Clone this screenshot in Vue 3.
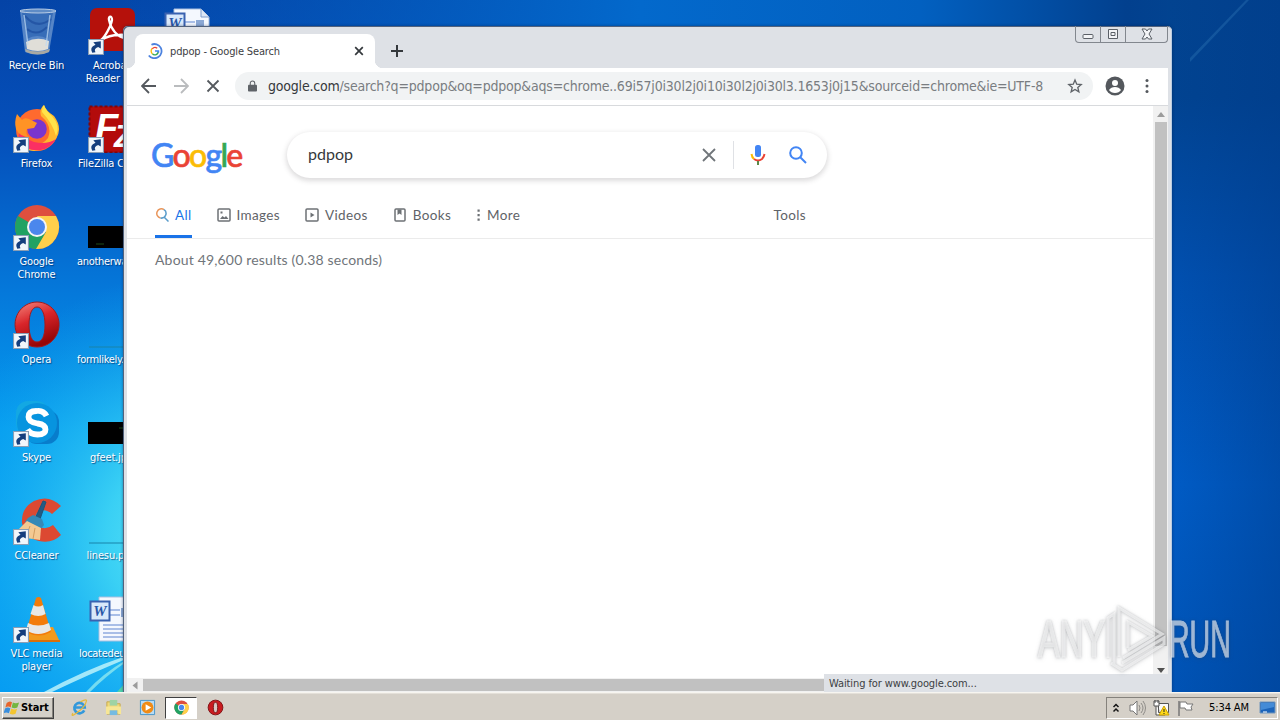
<template>
    <div class="desktop">
        <svg class="wallpaper" viewBox="0 0 1280 692" preserveAspectRatio="none" aria-hidden="true">
            <defs>
                <linearGradient id="sky" x1="0" y1="0" x2="0" y2="1">
                    <stop offset="0" stop-color="#0443a6" />
                    <stop offset="0.2" stop-color="#0550bb" />
                    <stop offset="0.42" stop-color="#0578da" />
                    <stop offset="0.62" stop-color="#049cf0" />
                    <stop offset="1" stop-color="#049bf2" />
                </linearGradient>
                <radialGradient id="glow" gradientUnits="userSpaceOnUse" cx="200" cy="540" r="270">
                    <stop offset="0" stop-color="#6bedf6" />
                    <stop offset="0.35" stop-color="#43d9f5" stop-opacity="0.85" />
                    <stop offset="1" stop-color="#12a9f0" stop-opacity="0" />
                </radialGradient>
                <linearGradient id="topband" x1="0" y1="0" x2="1" y2="0">
                    <stop offset="0" stop-color="#0355b8" stop-opacity="0" />
                    <stop offset="0.5" stop-color="#0369cc" />
                    <stop offset="0.72" stop-color="#0260c0" />
                    <stop offset="0.88" stop-color="#02408e" />
                    <stop offset="1" stop-color="#034a96" />
                </linearGradient>
                <linearGradient id="right" x1="0" y1="0" x2="0" y2="1">
                    <stop offset="0" stop-color="#024390" />
                    <stop offset="0.14" stop-color="#014391" />
                    <stop offset="0.4" stop-color="#0150b0" />
                    <stop offset="0.7" stop-color="#005cc6" />
                    <stop offset="1" stop-color="#0053b5" />
                </linearGradient>
                <linearGradient id="rightshade" x1="0" y1="0" x2="1" y2="0">
                    <stop offset="0" stop-color="#003a88" stop-opacity="0" />
                    <stop offset="1" stop-color="#003a88" stop-opacity="0.45" />
                </linearGradient>
            </defs>
            <rect width="1280" height="692" fill="url(#sky)" />
            <rect width="400" height="692" fill="url(#glow)" />
            <rect width="1280" height="30" fill="url(#topband)" />
            <rect x="1168" width="112" height="692" fill="url(#right)" />
            <rect x="1168" width="112" height="692" fill="url(#rightshade)" />
            <path d="M1190 58 1246 0h3L1190 62Z" fill="#3c86c0" opacity="0.3" />
            <path d="M44 692Q84 670 126 656V659Q90 674 52 692Z" fill="#c5f6fb" opacity="0.8" />
            <path d="M86 692Q102 674 126 660V662Q106 676 90 692Z" fill="#9cefef" opacity="0.7" />
            <path d="M117 692 126 682V692Z" fill="#5fdc9a" opacity="0.8" />
        </svg>

        <div class="icon-grid">
            <div v-for="item in icons" :key="item.id" class="desk-icon" :class="item.id">
                <svg class="desk-art" viewBox="0 0 48 48" aria-hidden="true">
                    <template v-if="item.id === 'bin'">
                        <path d="M7 4 12 45q12 5 24 0L43 4q-18-4-36 0Z" fill="#719bd0" opacity="0.75" />
                        <path d="M9 6 14 32q10-6 21 0L40 6Z" fill="#2f66b4" opacity="0.8" />
                        <path d="M13 35q11-6 23-1l-1 8q-10 4-21 0Z" fill="#e0ded8" />
                        <path d="M12 42q12 5 25 0l-1 3q-11 5-23 0Z" fill="#a9a9a3" />
                        <path d="M12 9q12 14 26 3M14 22q10 8 20-2" fill="none" stroke="#1c4d9e" stroke-width="2" opacity="0.7" />
                        <path d="m11 8 4 30M37 8l-4 31" stroke="#bfdaf4" stroke-width="1.5" opacity="0.7" />
                        <ellipse cx="25" cy="4" rx="18" ry="2" fill="#5f8cc6" stroke="#b7cbe4" />
                    </template>
                    <template v-else-if="item.id === 'acrobat'">
                        <rect x="2" y="1" width="45" height="43" rx="7" fill="#b5110b" />
                        <path d="M13 33c4-3 10-14 11-20 0-5-4-4-3 0 2 9 8 17 16 18 3-1 0-4-6-3-6 0-13 2-18 5Z" fill="none" stroke="#fff" stroke-width="2.3" stroke-linejoin="round" />
                    </template>
                    <template v-else-if="item.id === 'doc' || item.id === 'located'">
                        <path d="M11 2h27l8 8v36H11Z" fill="#f4f8fe" stroke="#a9bfdf" />
                        <path d="M38 2v8h8" fill="#dbe6f5" stroke="#7f9dcc" />
                        <path d="M22 15h10M22 20h10M15 30h28M15 34h28M15 38h28M15 42h28" stroke="#8eabe0" stroke-width="1.4" />
                        <rect x="33" y="13" width="8" height="9" fill="#8ba8d4" />
                        <rect x="2.5" y="6.5" width="19" height="19" fill="#d9e8fa" stroke="#3a62b0" stroke-width="2" />
                        <text x="12" y="21" text-anchor="middle" class="word-mark">W</text>
                    </template>
                    <template v-else-if="item.id === 'firefox'">
                        <circle cx="24" cy="25" r="21" fill="#ff6a2e" />
                        <path d="M28 11q-2-7 3-11 2 6 10 11 9 12 2 23-8 12-22 12-9 0-15-9 19 9 29-4 5-12-7-22Z" fill="#ffb82e" />
                        <path d="M29 7q0-5 2-7 2 6 8 11 9 10 4 20-3-12-14-24Z" fill="#ffe34a" />
                        <path d="M5 35q8 12 23 10 10-2 15-11-9 6-22 3Q10 33 7 23Z" fill="#fb2f63" />
                        <circle cx="24" cy="24" r="9.8" fill="#7a35ce" />
                        <path d="M3 24Q1 17 4 9l5 6q2-3 7-1l8 4-3 5-7 1q-2 5 2 8-9 0-13-8Z" fill="#ff9325" />
                    </template>
                    <template v-else-if="item.id === 'filezilla'">
                        <rect x="1.5" y="1.5" width="46" height="46" fill="#b30b0b" stroke="#830507" stroke-width="2" stroke-dasharray="3 2" />
                        <text x="7" y="36" class="fz-mark">F<tspan x="26" y="42" class="small">Z</tspan></text>
                    </template>
                    <template v-else-if="item.id === 'chrome'">
                        <circle cx="24" cy="24" r="22" fill="#de4f3e" />
                        <path d="M24 24 5 13A22 22 0 0 0 24 46L33 29Z" fill="#21a263" />
                        <path d="M24 13h19A22 22 0 0 1 23 46l10-17Z" fill="#ffd04b" />
                        <circle cx="24" cy="24" r="10" fill="#f5f5f5" />
                        <circle cx="24" cy="24" r="8" fill="#4b87ed" />
                    </template>
                    <template v-else-if="item.id === 'opera'">
                        <defs>
                            <linearGradient id="operaRed" x1="0" y1="0" x2="0.4" y2="1">
                                <stop offset="0" stop-color="#f58a80" />
                                <stop offset="0.48" stop-color="#d9252a" />
                                <stop offset="1" stop-color="#970606" />
                            </linearGradient>
                        </defs>
                        <path fill-rule="evenodd" d="M24 1a22 22.5 0 1 0 .1 0ZM24 6c5 0 8 7 8 18s-3 17-8 17-8-6-8-17 3-18 8-18Z" fill="url(#operaRed)" stroke="#a41a1b" />
                    </template>
                    <template v-else-if="item.id === 'skype'">
                        <rect x="3" y="2" width="33" height="34" rx="12" fill="#13a8e3" />
                        <rect x="12" y="11" width="34" height="34" rx="12" fill="#087dcc" />
                        <circle cx="24" cy="24" r="20" fill="#0794df" />
                        <path d="M33.500 17q-3-6-10-5-8 0-8 6 0 5 9 6.500 8 1 8 6 0 5-8 5-7 0-10-5" fill="none" stroke="#fff" stroke-width="5.800" />
                    </template>
                    <template v-else-if="item.id === 'ccleaner'">
                        <path d="M48 9Q36-3 21 4 8 11 9 26q3 15 17 18 13 3 22-6l-8-10q-8 6-14 1-7-6-2-13 7-6 15 1Z" fill="#dc4932" />
                        <path d="m21 24 9-20 3 1-7 20Z" fill="#235b83" stroke="#1b557c" />
                        <path d="m15 21 5-3 9 4 2 6-5 6-14-9Z" fill="#3589b7" />
                        <path d="m14 24 14 7-1 12-14-2-9-7Z" fill="#f4c992" />
                        <path d="m17 29-4 11M22 31l-2 11" stroke="#d39d60" />
                    </template>
                    <template v-else-if="item.id === 'vlc'">
                        <path d="m11 33-5 12h40l-6-13Z" fill="#f39a1b" />
                        <path d="m6 45 41 0v2H5Z" fill="#d96f09" />
                        <path d="M23 3q2.500-2 5 0l10 34q-12 7-25 0Z" fill="#f37c0a" />
                        <path d="m20.500 10-3 9q8 4 15 0l-2.500-9q-5 3-9.500 0ZM15 28l-2 7q12 8 25 0l-2-7q-11 5-21 0Z" fill="#e8e8e6" />
                    </template>
                    <template v-else-if="item.id === 'another' || item.id === 'gfeet'">
                        <rect y="23" width="48" height="22" />
                        <path :d="item.id === 'another' ? 'M8 41h8' : 'M31 29h8'" stroke="#1f4a18" />
                    </template>
                    <path v-else d="M1 46h47" stroke="#1883a9" stroke-width="1.2" />
                </svg>
                <svg v-if="item.shortcut" class="shortcut" viewBox="0 0 15 15" aria-hidden="true">
                    <path d="M.5.5h14v14H.5Z" fill="#f1f6fb" stroke="#8a9eb5" />
                    <path d="M4 13Q1 8 7 5.500L5 3l7-1v7L9.500 7.500Q5 9 7 12.500Z" fill="#153e7d" />
                </svg>
                <span class="desk-label">{{ item.label }}</span>
            </div>
        </div>

        <main class="browser">
            <header class="tab-strip">
                <div class="tab">
                    <svg class="loader" viewBox="0 0 18 18" aria-hidden="true">
                        <path d="M5 1.900A8 8 0 1 1 2 14" fill="none" stroke="#4c82df" stroke-width="2" />
                        <path d="M12.500 9A3.700 3.700 0 0 1 6 12" fill="none" stroke="#34a853" stroke-width="1.500" />
                        <path d="M6 12a4 4 0 0 1 0-6" fill="none" stroke="#fbbc05" stroke-width="1.500" />
                        <path d="M6 6.500a4 4 0 0 1 5.500-.5" fill="none" stroke="#ea4335" stroke-width="1.500" />
                        <path d="M9 9h4v2" fill="none" stroke="#4285f4" stroke-width="1.500" />
                    </svg>
                    <span class="tab-title">pdpop - Google Search</span>
                    <svg class="tab-close" viewBox="0 0 10 10" aria-hidden="true"><path d="m1.200 1.200 7.600 7.600M8.800 1.200 1.200 8.800" /></svg>
                </div>
                <svg class="new-tab" viewBox="0 0 12 12" aria-hidden="true"><path d="M6 0v12M0 6h12" /></svg>
                <div class="window-controls">
                    <span class="control"><svg viewBox="0 0 12 12"><rect x="1" y="6.500" width="10" height="4" rx="1" /></svg></span>
                    <span class="control"><svg viewBox="0 0 12 12"><path d="M1.500 1.500h9v9h-9ZM4 4.500h4v3H4Z" /></svg></span>
                    <span class="control close"><svg viewBox="0 0 12 12"><path d="M1 1h3.500L6 3l1.500-2H11L8 6l3 5H7.500L6 9l-1.500 2H1l3-5Z" /></svg></span>
                </div>
            </header>

            <div class="toolbar">
                <svg class="nav-icon" viewBox="0 0 16 16"><path d="M15 8H2M8 1 1 8l7 7" /></svg>
                <svg class="nav-icon muted" viewBox="0 0 16 16"><path d="M1 8h13M8 1l7 7-7 7" /></svg>
                <svg class="nav-icon stop" viewBox="0 0 16 16"><path d="m2.500 2.500 11 11M13.500 2.500l-11 11" /></svg>
                <div class="address">
                    <svg class="lock" viewBox="0 0 10 12"><path d="M1 4.500h8q1 0 1 1V11q0 1-1 1H1q-1 0-1-1V5.500q0-1 1-1Z" /><path d="M2.500 5V3a2.500 2.500 0 0 1 5 0v2" fill="none" stroke="#5f6368" stroke-width="1.200" /></svg>
                    <span class="host">google.com</span><span class="query">/search?q=pdpop&amp;oq=pdpop&amp;aqs=chrome..69i57j0i30l2j0i10i30l2j0i30l3.1653j0j15&amp;sourceid=chrome&amp;ie=UTF-8</span>
                    <svg class="star" viewBox="0 0 24 24"><path d="m12 3 2.600 6.200 6.700.6-5.100 4.400 1.600 6.500-5.800-3.400-5.800 3.400 1.600-6.500-5.100-4.400 6.700-.6Z" /></svg>
                </div>
                <svg class="profile" viewBox="0 0 20 20"><circle cx="10" cy="10" r="9.500" fill="#54585d" /><circle cx="10" cy="7" r="3" fill="#fff" /><path d="M4 14q2-3 6-3t6 3q-2 3-6 3t-6-3Z" fill="#fff" /></svg>
                <svg class="kebab" viewBox="0 0 4 16"><circle cx="2" cy="2.500" r="1.500" /><circle cx="2" cy="8" r="1.500" /><circle cx="2" cy="13.500" r="1.500" /></svg>
            </div>

            <div class="viewport">
                <section class="page">
                    <div class="search-row">
                        <div class="google-logo"><span>G</span><span>o</span><span>o</span><span>g</span><span>l</span><span>e</span></div>
                        <div class="search-box">
                            <span class="search-value">pdpop</span>
                            <svg class="clear" viewBox="0 0 14 14"><path d="m1 1 12 12M13 1 1 13" /></svg>
                            <i class="divider"></i>
                            <svg class="mic" viewBox="0 0 16 20"><rect x="5" width="6" height="12" rx="2.500" fill="#4285f4" /><path d="M1.500 9Q2 12.500 4 14" fill="none" stroke="#fbbc05" stroke-width="2" /><path d="M4 14q4 3 8 0 2-2 2.500-5" fill="none" stroke="#ea4335" stroke-width="2" /><path d="M8 16v4" stroke="#5c8a4a" stroke-width="2" /></svg>
                            <svg class="magnifier" viewBox="0 0 18 18"><circle cx="7" cy="7" r="5.800" /><path d="m11 11 6 6" /></svg>
                        </div>
                    </div>
                    <nav class="result-tabs">
                        <a v-for="tab in tabs" :key="tab.name" class="result-tab" :class="tab.name.toLowerCase()">
                            <svg :viewBox="tab.name === 'More' ? '5 0 4 14' : '0 0 14 14'" aria-hidden="true">
                                <template v-if="tab.name === 'All'">
                                    <path d="M9 1.700A4.600 4.600 0 1 0 5.500 10" stroke="#e9965b" />
                                    <path d="M9 1.700A4.600 4.600 0 0 1 5.500 10M9 9l4.500 4.500" stroke="#5a9dcc" />
                                </template>
                                <path v-else :d="tab.path" />
                                <path v-if="tab.fill" :d="tab.fill" class="solid" />
                            </svg>
                            <span>{{ tab.name }}</span>
                        </a>
                        <a class="tools">Tools</a>
                    </nav>
                    <p class="result-stats">About 49,600 results (0.38 seconds)</p>
                </section>
                <div class="v-scroll"><i class="arrow up"></i><i class="v-thumb"></i><i class="arrow down"></i></div>
            </div>
            <footer class="bottom-row">
                <i class="arrow left"></i>
                <i class="h-thumb"></i>
                <span class="status">Waiting for www.google.com...</span>
            </footer>
        </main>

        <footer class="taskbar">
            <button class="start" type="button">
                <svg viewBox="0 0 18 16"><path d="M3 3q3-3 6-1L7.500 8Q5 6 1.500 8Z" fill="#e7652c" /><path d="M10 2.500q3 1.500 7 0l-2 5.500q-3 1.500-6.500 0Z" fill="#73b641" /><path d="M1.200 9q3-2 6 0l-1.700 5.500q-3-2-6 0Z" fill="#398edd" /><path d="M8.200 9q3 2 6.500.5L13 15q-3 1.500-6.500 0Z" fill="#f4c52f" /></svg>
                Start
            </button>
            <div class="quick-launch">
                <span class="launch"><svg viewBox="0 0 18 18"><path d="M14 12a5.500 5.500 0 1 1 .5-3H5" fill="none" stroke="#3298db" stroke-width="2.800" /><path d="M2 15Q-1 20 7 14T16 3Q18-1 10 3" fill="none" stroke="#e5b93c" stroke-width="1.300" /></svg></span>
                <span class="launch"><svg viewBox="0 0 18 18"><path d="M2 3h6l1 2h7v11H2Z" fill="#f1d878" stroke="#c7a94a" /><path d="M5 1h8v6H5Z" fill="#9ed3a4" /><path d="M1 8h16v8h-3v-4H5v4H1Z" fill="#f7e695" /><path d="M5 12h8v5H5Z" fill="#75bbe2" /></svg></span>
                <span class="launch"><svg viewBox="0 0 18 18"><path d="M1.500 1.500h15v15h-15Z" fill="#b8dcf5" stroke="#4594c9" /><circle cx="9" cy="9" r="6.300" fill="#f08b16" /><path d="m7 5.500 6 3.500-6 3.500Z" fill="#fff" /></svg></span>
                <span class="launch active"><svg viewBox="0 0 48 48"><circle cx="24" cy="24" r="20" fill="#de4f3e" /><path d="M24 24 7 13A20 20 0 0 0 24 44l9-15Z" fill="#21a263" /><path d="M24 14h18A20 20 0 0 1 24 44l9-15Z" fill="#ffd04b" /><circle cx="24" cy="24" r="10" fill="#fff" /><circle cx="24" cy="24" r="7.500" fill="#4b87ed" /></svg></span>
                <span class="launch"><svg viewBox="0 0 18 18"><circle cx="9" cy="9" r="7.800" fill="#c91b20" stroke="#7c1214" /><ellipse cx="9" cy="9" rx="2.300" ry="5.500" fill="#d9c8c4" stroke="#751416" /></svg></span>
            </div>
            <div class="tray">
                <svg class="chevrons" viewBox="0 0 8 12"><path d="m1.500 5 2.500-2.500L6.500 5M1.500 9.500 4 7l2.500 2.500" /></svg>
                <svg class="tray-icon" viewBox="0 0 17 16"><path d="M1 5h3l4-4v14l-4-4H1Z" fill="#fff" stroke="#777" /><path d="M10 5q2 3 0 6M12 3q4 5 0 10M14 1q5 7 0 14" fill="none" stroke="#8e8c88" /></svg>
                <svg class="tray-icon" viewBox="0 0 17 16"><path d="M5.500 3.500h10v9h-10ZM3 6v9h9" fill="#f9f9f9" stroke="#555" /><path d="M1 1h5v5H1ZM2 0v3M5 0v3" fill="#fff" stroke="#555" /><path d="m11 6 5 9H6Z" fill="#ffda19" stroke="#cda100" /><path d="M11 9v3M11 13v1" stroke="#222" /></svg>
                <svg class="tray-icon" viewBox="0 0 17 16"><path d="M2 1v15" stroke="#777" stroke-width="1.500" /><path d="M3 2h6l1 2h6l-2 3 1 3H9L8 8H3Z" fill="#fff" stroke="#777" /></svg>
                <span class="clock">5:34 AM</span>
                <svg class="show-desktop" viewBox="0 0 17 14"><path d="M1 1h15v11H1Z" fill="#1c64ba" stroke="#7096bd" /><path d="M2 2h13v4L2 9Z" fill="#448bd7" /><path d="M4 11h4" stroke="#fff" /></svg>
            </div>
        </footer>

        <svg class="watermark" viewBox="0 0 220 84" aria-label="ANY RUN">
            <g class="mark">
                <text transform="translate(4 57) scale(0.64 1)">ANY</text>
                <text transform="translate(135 57) scale(0.56 1)">RUN</text>
                <path d="M74 58V18l6-4v50M85 57V8l43 26-39 24M94 48V22l24 14-24 14M77 63l11 7 42-26v-6L88 63" />
            </g>
        </svg>
    </div>
</template>

<script setup>
const icons = [
    { id: 'bin', label: 'Recycle Bin' },
    { id: 'acrobat', label: 'Acrobat\nReader DC', shortcut: true },
    { id: 'doc', label: '' },
    { id: 'firefox', label: 'Firefox', shortcut: true },
    { id: 'filezilla', label: 'FileZilla Client', shortcut: true },
    { id: 'chrome', label: 'Google\nChrome', shortcut: true },
    { id: 'another', label: 'anotherwa...' },
    { id: 'opera', label: 'Opera', shortcut: true },
    { id: 'formlikely', label: 'formlikely.jpg' },
    { id: 'skype', label: 'Skype', shortcut: true },
    { id: 'gfeet', label: 'gfeet.jpg' },
    { id: 'ccleaner', label: 'CCleaner', shortcut: true },
    { id: 'linesu', label: 'linesu.png' },
    { id: 'vlc', label: 'VLC media\nplayer', shortcut: true },
    { id: 'located', label: 'locatedeu...' },
];

const frame = 'M2 1h10q1 0 1 1v10q0 1-1 1H2q-1 0-1-1V2q0-1 1-1Z';

const tabs = [
    { name: 'All' },
    { name: 'Images', path: frame, fill: 'm3 11 2.500-3 2 1.500L9 8l2.500 3ZM3.500 3.500h2v2h-2Z' },
    { name: 'Videos', path: frame, fill: 'm5.500 4.500 4 2.500-4 2.500Z' },
    { name: 'Books', path: 'M3 1h8q1 0 1 1v10q0 1-1 1H3q-1 0-1-1V2q0-1 1-1Z', fill: 'M4.500 1.500v5.500l2-1.500 2 1.500V1.500Z' },
    { name: 'More', fill: 'M6 1.500h2.200v2.200H6ZM6 6h2.200v2.200H6ZM6 10.500h2.200v2.200H6Z' },
];
</script>

<style>
body {
    margin: 0;
    overflow: hidden;
}
</style>

<style scoped>
* {
    box-sizing: border-box;
}

.desktop {
    position: relative;
    width: 1280px;
    height: 720px;
    overflow: hidden;
    display: flex;
    flex-direction: column;
    font-family: "DejaVu Sans Condensed", "DejaVu Sans", sans-serif;
    font-size: 11px;
}

.wallpaper {
    position: absolute;
    width: 1280px;
    height: 692px;
}

.icon-grid {
    position: absolute;
    top: 7px;
    left: -1px;
    display: grid;
    grid-template-columns: repeat(3, 75px);
    grid-auto-rows: 98px;
}

.desk-icon {
    position: relative;
    display: flex;
    flex-direction: column;
    align-items: center;
    color: #fff;
}

.desk-icon:nth-child(2n + 4) {
    grid-column: 1;
}

.desk-icon:nth-child(2n + 5) {
    grid-column: 2;
}

.desk-art {
    width: 48px;
    height: 48px;
    flex-shrink: 0;
}

.shortcut {
    position: absolute;
    left: 14px;
    top: 32px;
    width: 16px;
    height: 16px;
}

.desk-label {
    margin-top: 4px;
    font-size: 11px;
    line-height: 13px;
    letter-spacing: -0.15px;
    text-align: center;
    white-space: pre;
    text-shadow: 1px 1px 1px rgba(0, 35, 90, 0.65);
}

/* names long enough to start at the left edge of their cell */
.another .desk-label,
.formlikely .desk-label,
.located .desk-label {
    align-self: flex-start;
    margin-left: 3px;
    letter-spacing: -0.3px;
}

.located .desk-label {
    margin-left: 5px;
}

.word-mark {
    font: italic bold 15px "Liberation Serif", serif;
    fill: #2955a6;
}

.fz-mark {
    font: italic bold 38px "Liberation Sans", sans-serif;
    fill: #fff;
}

.fz-mark .small {
    font-size: 31px;
}

.browser {
    position: relative;
    width: 1049px;
    height: 666px;
    margin: 26px 0 0 123px;
    padding: 0 4px;
    display: flex;
    flex-direction: column;
    background: #dee1e6;
    border-radius: 5px 5px 0 0;
    box-shadow: inset 1px 1px #53637d, inset -1px 0 #b9cce2, 0 0 3px rgba(0, 24, 66, 0.5);
}

.tab-strip {
    height: 42px;
    flex-shrink: 0;
    display: flex;
    align-items: flex-end;
}

.tab {
    position: relative;
    width: 240px;
    height: 34px;
    margin-left: 8px;
    padding: 0 11px 0 12px;
    display: flex;
    align-items: center;
    background: #fff;
    border-radius: 8px 8px 0 0;
}

.tab::before,
.tab::after {
    content: "";
    position: absolute;
    bottom: 0;
    width: 8px;
    height: 8px;
}

.tab::before {
    left: -8px;
    background: radial-gradient(circle at 0 0, transparent 8px, #fff 8.5px);
}

.tab::after {
    right: -8px;
    background: radial-gradient(circle at 100% 0, transparent 8px, #fff 8.5px);
}

.loader {
    width: 16px;
    height: 16px;
    margin-right: 7px;
}

.tab-title {
    flex: 1;
    color: #3c4043;
    white-space: nowrap;
    letter-spacing: -0.15px;
}

.tab-close {
    width: 10px;
    height: 10px;
    stroke: #34383c;
    stroke-width: 1.7;
}

.new-tab {
    width: 12px;
    height: 12px;
    margin: 0 0 11px 16px;
    stroke: #34383c;
    stroke-width: 2;
}

.window-controls {
    height: 17px;
    margin-left: auto;
    align-self: flex-start;
    display: flex;
    border: 1px solid #82878e;
    border-top: 0;
    border-radius: 0 0 4px 4px;
}

.control {
    width: 25px;
    display: grid;
    place-items: center;
    border-right: 1px solid #82878e;
}

.control.close {
    width: 41px;
    border-right: 0;
}

.control svg {
    width: 12px;
    height: 12px;
    fill: #f3f4f6;
    stroke: #5b6067;
}

.toolbar {
    height: 38px;
    flex-shrink: 0;
    display: flex;
    align-items: center;
    padding: 0 0 2px 14px;
    background: #fff;
    border-bottom: 1px solid #d8dadd;
}

.nav-icon {
    width: 16px;
    height: 16px;
    margin-right: 16px;
    fill: none;
    stroke: #55595e;
    stroke-width: 1.8;
}

.nav-icon.muted {
    stroke: #babcbe;
}

.nav-icon.stop {
    margin-right: 14px;
}

.address {
    width: 858px;
    height: 28px;
    padding: 0 10px 0 13px;
    border-radius: 14px;
    display: flex;
    align-items: center;
    background: #f1f3f4;
    white-space: nowrap;
    font-size: 14px;
    letter-spacing: -0.205px;
    color: #797d81;
}

.lock {
    width: 9px;
    height: 12px;
    margin-right: 11px;
    fill: #5f6368;
}

.host {
    color: #36393c;
}

.star {
    width: 16px;
    height: 16px;
    margin-left: auto;
    fill: none;
    stroke: #5f6368;
    stroke-width: 2;
}

.profile {
    width: 20px;
    height: 20px;
    margin-left: 12px;
}

.kebab {
    width: 4px;
    height: 16px;
    margin-left: 20px;
    fill: #54585d;
}

.viewport {
    height: 572px;
    flex-shrink: 0;
    display: flex;
    background: #fff;
}

.page {
    width: 1026px;
    font-family: Lato, "Open Sans", sans-serif;
    color: #5f6368;
}

.search-row {
    height: 98px;
    display: flex;
    padding: 26px 0 0 24px;
}

.google-logo {
    width: 136px;
    height: 46px;
    font: 500 32px/46px Lato, sans-serif;
    letter-spacing: -1.7px;
    -webkit-text-stroke: 0.6px;
}

.google-logo span:nth-child(3n + 1) {
    color: #4285f4;
}

.google-logo span:nth-child(2),
.google-logo span:nth-child(6) {
    color: #ea4335;
}

.google-logo span:nth-child(3) {
    color: #fbbc05;
}

.google-logo span:nth-child(5) {
    color: #34a853;
}

.search-box {
    width: 540px;
    height: 46px;
    padding: 0 20px 0 21px;
    display: flex;
    align-items: center;
    background: #fff;
    border-radius: 23px;
    box-shadow: 0 2px 5px 1px rgba(64, 60, 67, 0.18);
}

.search-value {
    flex: 1;
    padding-bottom: 3px;
    font-size: 16px;
    color: #36393c;
}

.clear {
    width: 14px;
    height: 14px;
    stroke: #70757a;
    stroke-width: 1.8;
}

.divider {
    width: 1px;
    height: 28px;
    margin: 0 16px 0 17px;
    background: #dfe1e5;
}

.mic {
    width: 16px;
    height: 20px;
    margin-right: 23px;
}

.magnifier {
    width: 18px;
    height: 18px;
    fill: none;
    stroke: #4285f4;
    stroke-width: 2;
}

.result-tabs {
    height: 35px;
    display: flex;
    padding-left: 28px;
    border-bottom: 1px solid #ebebeb;
    font-size: 13.5px;
    letter-spacing: 0.35px;
}

.result-tab {
    height: 34px;
    padding-bottom: 13px;
    margin-right: 25px;
    display: flex;
    align-items: center;
    white-space: nowrap;
}

.result-tab svg {
    width: 14px;
    height: 14px;
    margin-right: 6px;
    fill: none;
    stroke: #6d7175;
    stroke-width: 1.5;
}

.result-tab .solid {
    fill: #6d7175;
    stroke: none;
}

.result-tab.more svg {
    width: 5px;
}

.tools {
    margin-left: auto;
    margin-right: 347px;
    line-height: 22px;
}

.result-tab.all {
    color: #1a73e8;
    border-bottom: 3px solid #1a73e8;
    padding-bottom: 10px;
}

.result-stats {
    margin: 11px 0 0 28px;
    font-size: 14px;
    line-height: 20px;
    letter-spacing: 0.17px;
    color: #70757a;
}

.v-scroll {
    width: 15px;
    display: flex;
    flex-direction: column;
    align-items: center;
    background: #f1f1f1;
}

.arrow {
    width: 15px;
    height: 16px;
    display: grid;
    place-items: center;
}

.arrow::before {
    content: "";
    border: 4px solid transparent;
    border-top: 0;
    border-bottom: 5px solid #9c9c9c;
}

.arrow.down::before {
    transform: rotate(180deg);
    border-bottom-color: #505050;
}

.arrow.left::before {
    transform: rotate(-90deg);
}

.v-thumb {
    width: 12px;
    height: 524px;
    background: #c1c1c1;
    margin-bottom: auto;
}

.bottom-row {
    height: 14px;
    display: flex;
    align-items: center;
    background: #f1f1f1;
}

.h-thumb {
    width: 681px;
    height: 12px;
    margin-left: 1px;
    background: #c1c1c1;
}

.status {
    width: 344px;
    height: 18px;
    align-self: flex-end;
    padding-left: 5px;
    line-height: 20px;
    letter-spacing: -0.1px;
    background: #dee1e6;
    color: #3c4043;
}

.taskbar {
    position: relative;
    height: 28px;
    padding: 3px 2px 1px;
    display: flex;
    align-items: center;
    background: #d5d0c8;
    border-top: 1px solid #f7f5f0;
    box-shadow: inset 0 1px #e4e0d9;
}

.start {
    width: 52px;
    height: 22px;
    padding: 0 1px;
    display: flex;
    align-items: center;
    border: 1px solid;
    border-color: #fff #404040 #404040 #fff;
    box-shadow: inset -1px -1px #85827c;
    background: #d4d0c8;
    font: bold 11px "DejaVu Sans Condensed", sans-serif;
    letter-spacing: -0.1px;
}

.start svg {
    width: 16px;
    height: 15px;
    margin-right: 1px;
}

.quick-launch {
    display: flex;
    gap: 2px;
    margin-left: 9px;
}

.launch {
    width: 32px;
    height: 22px;
    display: grid;
    place-items: center;
}

.launch svg {
    width: 17px;
    height: 17px;
}

.launch.active {
    background: #fff;
    border: 1px solid;
    border-color: #404040 #fff #fff #404040;
}

.tray {
    width: 172px;
    height: 22px;
    margin-left: auto;
    padding: 0 1px 0 5px;
    display: flex;
    align-items: center;
    border: 1px solid;
    border-color: #85827c #fff #fff #85827c;
}

.chevrons {
    width: 8px;
    height: 12px;
    margin-right: 9px;
    fill: none;
    stroke: #151515;
    stroke-width: 1.5;
}

.tray-icon {
    width: 17px;
    height: 16px;
    margin-right: 7px;
}

.clock {
    margin-left: 8px;
    white-space: nowrap;
    letter-spacing: -0.1px;
}

.show-desktop {
    width: 17px;
    height: 14px;
    margin-left: auto;
}

.watermark {
    position: absolute;
    left: 1034px;
    top: 600px;
    width: 220px;
    height: 84px;
    filter: drop-shadow(0 0 1px rgba(60, 65, 72, 0.42)) drop-shadow(0 1px 2px rgba(60, 65, 72, 0.25));
}

.mark {
    font: 51px "Liberation Sans", sans-serif;
    fill: #fff;
    opacity: 0.6;
}

.mark text {
    stroke: #fff;
}

.mark path {
    fill: none;
    stroke: #fff;
    stroke-width: 3;
}
</style>
